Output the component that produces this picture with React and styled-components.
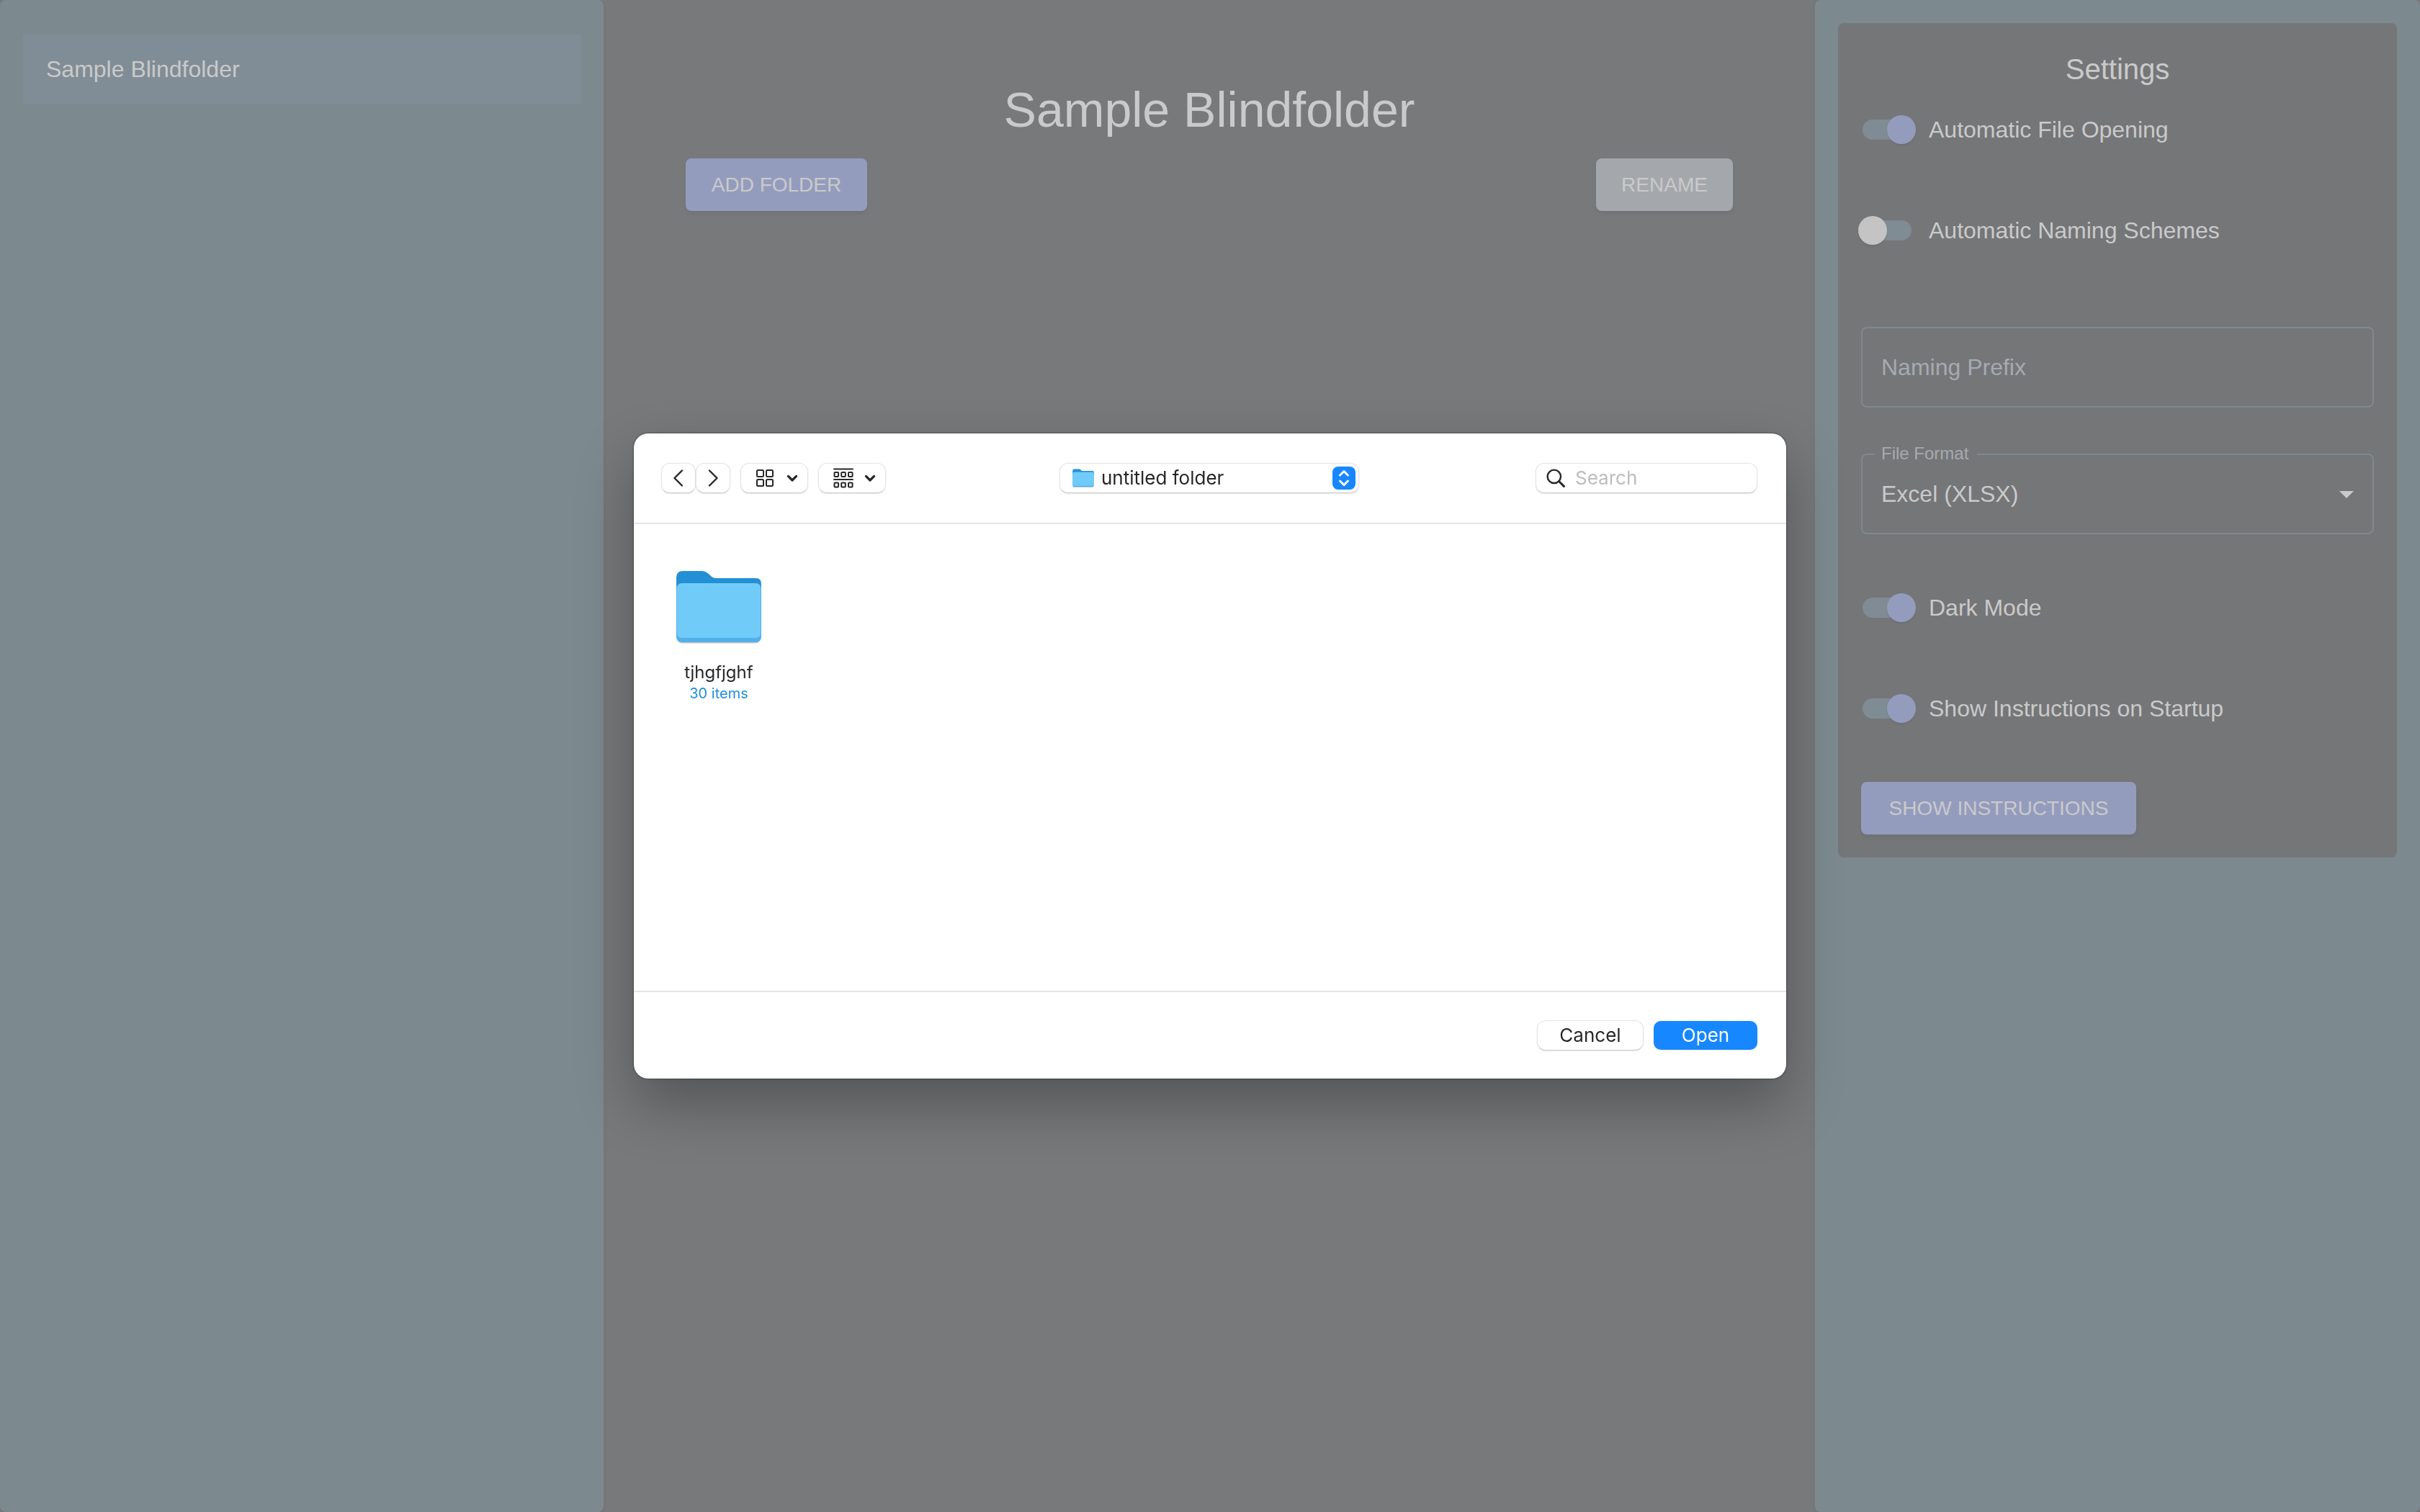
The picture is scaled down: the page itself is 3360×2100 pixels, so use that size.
import React, { useState } from "react";
import styled, { createGlobalStyle, css } from "styled-components";

const color = {
  page: "#78797b",
  panel: "#7c8a90",
  card: "#757678",
  selected: "#818d96",
  primary: "#949cbe",
  neutral: "#a4a8ac",
  outline: "#7c8a90",
  text: "#cacaca",
  muted: "#a5abaf",
  ink: "#262729",
  blue: "#1787ff",
  hairline: "#e5e5e5",
};

const GlobalStyle = createGlobalStyle`
  *, *::before, *::after { box-sizing: border-box; }
  body {
    margin: 0;
    background: ${color.page};
    color: ${color.text};
    font-family: "Liberation Sans", Arial, sans-serif;
    font-size: 32px;
    line-height: 48px;
  }
  button, input, select { font: inherit; color: inherit; }
`;

/* ---------- Page ---------- */

const Page = styled.div`
  display: grid;
  grid-template-columns: 1fr 2fr 1fr;
  min-height: 100vh;
`;

const Panel = styled.aside`
  background: ${color.panel};
  border-radius: 8px;
  padding: ${(p) => (p.$list ? "48px" : "32px")} 32px 32px;
  margin-right: ${(p) => (p.$list ? "2px" : "0")};
  box-shadow: 0 2px 6px rgba(0, 0, 0, 0.06);
`;

const FolderList = styled.ul`
  list-style: none;
  margin: 0;
  padding: 0;
`;

const FolderItem = styled.button`
  display: block;
  width: 100%;
  height: 96px;
  padding: 0 32px;
  border: 0;
  background: ${color.selected};
  text-align: left;
`;

const Main = styled.main`
  padding: 110px 114px 0 112px;
`;

const Title = styled.h1`
  margin: 0 0 26px;
  font-size: 68px;
  font-weight: 400;
  line-height: 84px;
  text-align: center;
`;

const Actions = styled.div`
  display: flex;
  justify-content: space-between;
`;

const Button = styled.button`
  height: 73px;
  min-width: ${(p) => p.$minWidth};
  padding: 0 32px;
  border: 0;
  border-radius: 8px;
  background: ${(p) => (p.$neutral ? color.neutral : color.primary)};
  font-size: 28px;
  text-transform: uppercase;
  white-space: nowrap;
  box-shadow: 0 4px 6px rgba(0, 0, 0, 0.05);
`;

/* ---------- Settings ---------- */

const Card = styled.section`
  display: flex;
  flex-direction: column;
  align-items: stretch;
  padding: 32px;
  border-radius: 8px;
  background: ${color.card};
`;

const CardTitle = styled.h2`
  margin: 0 0 14px;
  font-size: 40px;
  font-weight: 400;
  line-height: 64px;
  text-align: center;
`;

const Form = styled.form`
  display: flex;
  flex-direction: column;
  gap: 64px;
`;

const SwitchRow = styled.label`
  display: flex;
  align-items: center;
  gap: 24px;
  height: 76px;
  padding-left: 2px;
`;

const Switch = styled.input`
  appearance: none;
  position: relative;
  flex: none;
  width: 68px;
  height: 28px;
  margin: 0;
  border-radius: 14px;
  background: #7f8c94;

  &::before {
    content: "";
    position: absolute;
    top: -6px;
    left: -6px;
    width: 40px;
    height: 40px;
    border-radius: 50%;
    background: #c4c4c4;
    box-shadow: 0 2px 3px rgba(0, 0, 0, 0.07);
  }

  &:checked::before {
    left: 34px;
    background: ${color.primary};
  }
`;

const Field = styled.div`
  position: relative;
  margin-top: ${(p) => (p.$spaced ? "32px" : "0")};
`;

const control = css`
  appearance: none;
  display: block;
  width: 100%;
  height: 112px;
  padding: 0 26px;
  border: 2px solid ${color.outline};
  border-radius: 8px;
  background: transparent;
`;

const TextInput = styled.input`
  ${control}
  &::placeholder {
    color: ${color.muted};
    opacity: 1;
  }
`;

const Select = styled.select`
  ${control}
`;

const FieldLabel = styled.label`
  position: absolute;
  top: -14px;
  left: 18px;
  padding: 0 12px 0 10px;
  background: ${color.card};
  color: ${color.muted};
  font-size: 24px;
  line-height: 28px;
`;

const SelectArrow = styled.svg`
  position: absolute;
  top: 52px;
  right: 28px;
  width: 20px;
  height: 10px;
  fill: ${color.text};
  pointer-events: none;
`;

const FormFooter = styled.div`
  display: flex;
`;

/* ---------- File dialog ---------- */

const Overlay = styled.div`
  position: fixed;
  inset: 0;
  display: flex;
  align-items: center;
  justify-content: center;
`;

const Dialog = styled.div`
  display: flex;
  flex-direction: column;
  width: 1600px;
  max-width: 100%;
  height: 896px;
  border-radius: 20px;
  background: #fff;
  color: ${color.ink};
  font-family: Inter, "Noto Sans", sans-serif;
  font-size: 26px;
  line-height: 32px;
  box-shadow: 0 0 3px rgba(0, 0, 0, 0.6), 0 36px 80px rgba(0, 0, 0, 0.3);
`;

const Toolbar = styled.header`
  display: grid;
  grid-template-columns: 1fr auto 1fr;
  align-items: center;
  height: 126px;
  padding: 0 40px 0 38px;
  border-bottom: 2px solid ${color.hairline};
`;

const ToolGroup = styled.div`
  display: flex;
  gap: 14px;
`;

const ToolPair = styled.div`
  display: flex;
`;

const raised = css`
  height: 42px;
  border: 1px solid #e3e3e3;
  border-bottom-color: #c9c9c9;
  border-radius: 12px;
  background: #fff;
  box-shadow: 0 1px 2px rgba(0, 0, 0, 0.1);
`;

const ToolButton = styled.button`
  ${raised}
  display: flex;
  align-items: center;
  justify-content: ${(p) => (p.$menu ? "space-between" : "center")};
  width: ${(p) => (p.$menu ? "94px" : "48px")};
  padding: ${(p) => (p.$menu ? "0 13px 0 20px" : "0")};
`;

const Icon = styled.svg`
  display: block;
  flex: none;
  fill: none;
  stroke: ${color.ink};
  stroke-width: ${(p) => p.$weight || 2};
  stroke-linecap: round;
  stroke-linejoin: round;
`;

const PathBox = styled.div`
  ${raised}
  display: flex;
  align-items: center;
  gap: 10px;
  width: 416px;
  padding: 0 4px 0 17px;
`;

const PathSelect = styled.select`
  appearance: none;
  flex: 1;
  min-width: 0;
  padding: 0;
  border: 0;
  background: transparent;
`;

const Stepper = styled.span`
  display: grid;
  place-items: center;
  width: 32px;
  height: 32px;
  border-radius: 8px;
  background: ${color.blue};
`;

const SearchBox = styled.label`
  ${raised}
  justify-self: end;
  display: flex;
  align-items: center;
  gap: 14px;
  width: 308px;
  padding: 0 14px;
`;

const SearchInput = styled.input`
  flex: 1;
  min-width: 0;
  padding: 0;
  border: 0;
  outline: 0;
  background: transparent;

  &::placeholder {
    color: #bdbdbd;
    opacity: 1;
  }
`;

const Files = styled.div`
  flex: 1;
  display: flex;
  align-items: flex-start;
  padding: 64px 38px;
`;

const FileTile = styled.button`
  display: flex;
  flex-direction: column;
  align-items: center;
  width: 160px;
  padding: 0;
  border: 0;
  background: transparent;
`;

const FileName = styled.span`
  margin-top: 24px;
  font-size: 24px;
  line-height: 32px;
`;

const FileMeta = styled.span`
  color: #1f8fd9;
  font-size: 20px;
  line-height: 26px;
`;

const DialogFooter = styled.footer`
  display: flex;
  align-items: center;
  justify-content: flex-end;
  gap: 14px;
  height: 122px;
  padding: 0 40px;
  border-top: 2px solid ${color.hairline};
`;

const DialogButton = styled.button`
  ${raised}
  width: 148px;
  padding: 0;
  ${(p) =>
    p.$primary &&
    css`
      width: 144px;
      height: 40px;
      border: 0;
      border-radius: 10px;
      background: ${color.blue};
      color: #fff;
    `}
`;

/* ---------- Drawings ---------- */

const Chevron = ({ d }) => (
  <Icon width="16" height="24" viewBox="0 0 16 24" $weight={2.4} aria-hidden="true">
    <path d={d} />
  </Icon>
);

const ChevronDown = () => (
  <Icon width="16" height="12" viewBox="0 0 16 12" $weight={3.2} aria-hidden="true">
    <path d="M2.4 3.4 8 9l5.6-5.6" />
  </Icon>
);

const GridIcon = () => (
  <Icon width="26" height="26" viewBox="0 0 26 26" aria-hidden="true">
    {[2, 15].map((y) =>
      [2, 15].map((x) => <rect key={`${x}-${y}`} x={x} y={y} width="9" height="9" rx="1.5" />)
    )}
  </Icon>
);

const GroupIcon = () => (
  <Icon width="28" height="28" viewBox="0 0 28 28" aria-hidden="true">
    <path d="M1 1.5h26M1 16h26" />
    {[6, 20.5].map((y) =>
      [1.5, 11.2, 21].map((x) => <rect key={`${x}-${y}`} x={x} y={y} width="5.6" height="6" rx="1" />)
    )}
  </Icon>
);

const SearchIcon = () => (
  <Icon width="26" height="26" viewBox="0 0 26 26" $weight={2.4} aria-hidden="true">
    <circle cx="10.8" cy="10.8" r="9.2" />
    <path d="M17.5 17.5 24.4 24.4" strokeWidth="3" />
  </Icon>
);

const FolderIcon = ({ width, height }) => (
  <svg width={width} height={height} viewBox="0 0 120 102" aria-hidden="true">
    <path d="M3 98.500h114a8 8 0 0 1-6 3H9a8 8 0 0 1-6-3z" fill="#c9c4c4" />
    <path d="M1 12C1 4 4 1 11 1h24c6 0 9 2 13 6 3 3 5 4 9 4h54c6 0 8 3 8 9v14H1z" fill="#2390d6" />
    <path d="M1 26c0-6 3-8 8-8h102c5 0 8 2 8 8v66c0 5-3 8-8 8H9c-5 0-8-3-8-8z" fill="#52b0e8" />
    <path d="M2 26c0-5 3-8 8-8h100c5 0 8 3 8 8v61c0 5-3 7-8 7H10c-5 0-8-2-8-7z" fill="#71cbf9" />
  </svg>
);

/* ---------- App ---------- */

function Toggle({ label, initial }) {
  const [on, setOn] = useState(initial);
  return (
    <SwitchRow>
      <Switch type="checkbox" role="switch" checked={on} onChange={() => setOn(!on)} />
      {label}
    </SwitchRow>
  );
}

function Settings() {
  return (
    <Card>
      <CardTitle>Settings</CardTitle>
      <Form>
        <Toggle label="Automatic File Opening" initial={true} />
        <Toggle label="Automatic Naming Schemes" initial={false} />
        <Field $spaced>
          <TextInput type="text" placeholder="Naming Prefix" aria-label="Naming Prefix" />
        </Field>
        <Field>
          <FieldLabel htmlFor="file-format">File Format</FieldLabel>
          <Select id="file-format" defaultValue="xlsx">
            <option value="xlsx">Excel (XLSX)</option>
          </Select>
          <SelectArrow viewBox="0 0 20 10" aria-hidden="true">
            <path d="M0 0h20L10 10z" />
          </SelectArrow>
        </Field>
        <Toggle label="Dark Mode" initial={true} />
        <Toggle label="Show Instructions on Startup" initial={true} />
        <FormFooter>
          <Button type="button" $minWidth="382px">Show Instructions</Button>
        </FormFooter>
      </Form>
    </Card>
  );
}

function FileDialog() {
  return (
    <Overlay>
      <Dialog role="dialog" aria-label="Choose a folder">
        <Toolbar>
          <ToolGroup>
            <ToolPair>
              <ToolButton type="button" aria-label="Back">
                <Chevron d="M13 1.5 2.5 12 13 22.5" />
              </ToolButton>
              <ToolButton type="button" aria-label="Forward">
                <Chevron d="M3 1.5 13.5 12 3 22.5" />
              </ToolButton>
            </ToolPair>
            <ToolButton type="button" aria-label="View as icons" $menu>
              <GridIcon />
              <ChevronDown />
            </ToolButton>
            <ToolButton type="button" aria-label="Group items" $menu>
              <GroupIcon />
              <ChevronDown />
            </ToolButton>
          </ToolGroup>
          <PathBox>
            <FolderIcon width="30" height="28" />
            <PathSelect aria-label="Current folder" defaultValue="untitled">
              <option value="untitled">untitled folder</option>
            </PathSelect>
            <Stepper>
              <svg width="16" height="24" viewBox="0 0 16 24" fill="none" stroke="#fff" strokeWidth="3" strokeLinecap="round" strokeLinejoin="round" aria-hidden="true">
                <path d="M2.5 8 8 2.5 13.5 8M2.5 16 8 21.5 13.5 16" />
              </svg>
            </Stepper>
          </PathBox>
          <SearchBox>
            <SearchIcon />
            <SearchInput type="search" placeholder="Search" aria-label="Search" />
          </SearchBox>
        </Toolbar>
        <Files>
          <FileTile type="button">
            <FolderIcon width="120" height="102" />
            <FileName>tjhgfjghf</FileName>
            <FileMeta>30 items</FileMeta>
          </FileTile>
        </Files>
        <DialogFooter>
          <DialogButton type="button">Cancel</DialogButton>
          <DialogButton type="button" $primary>Open</DialogButton>
        </DialogFooter>
      </Dialog>
    </Overlay>
  );
}

export default function App() {
  return (
    <>
      <GlobalStyle />
      <Page>
        <Panel $list>
          <FolderList>
            <li>
              <FolderItem type="button">Sample Blindfolder</FolderItem>
            </li>
          </FolderList>
        </Panel>
        <Main>
          <Title>Sample Blindfolder</Title>
          <Actions>
            <Button type="button" $minWidth="252px">Add Folder</Button>
            <Button type="button" $neutral $minWidth="190px">Rename</Button>
          </Actions>
        </Main>
        <Panel>
          <Settings />
        </Panel>
      </Page>
      <FileDialog />
    </>
  );
}
